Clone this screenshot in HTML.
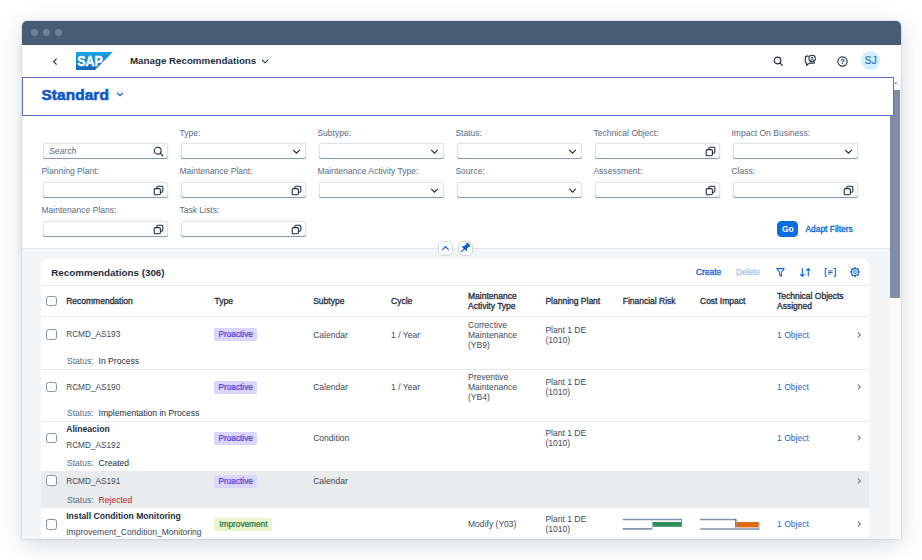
<!DOCTYPE html>
<html lang="en">
<head>
<meta charset="utf-8">
<title>Manage Recommendations</title>
<style>
*{box-sizing:border-box;margin:0;padding:0}
html,body{width:922px;height:560px;overflow:hidden;background:#fff}
body{font-family:"Liberation Sans",sans-serif;color:#1d2d3e;position:relative}
.abs{position:absolute}
.win{position:absolute;left:22px;top:21px;width:878.6px;height:518px;border-radius:5px 5px 0 0;background:#fff;box-shadow:0 5px 22px rgba(50,65,90,.20),0 0 2px rgba(50,65,90,.35);overflow:hidden}
.tbar{position:absolute;left:0;top:0;width:879px;height:24px;background:#475c76}
.dot{position:absolute;top:8px;width:7px;height:7px;border-radius:50%;background:#6e8099}
.shell{position:absolute;left:0;top:24px;width:879px;height:32px;background:#fff}
.t{position:absolute;white-space:nowrap;line-height:1}
.hdr{position:absolute;left:0;top:56px;width:871.5px;height:38.5px;border:1px solid #5b6fc4;background:#fff}
.filters{position:absolute;left:0;top:93px;width:868px;height:135px;background:#fff}
.content{position:absolute;left:0;top:227px;width:868px;height:291px;background:#f4f5f7;border-top:1.4px solid #e3e5e7}
.lbl{position:absolute;font-size:8.55px;color:#5b6b7c;white-space:nowrap;line-height:10px}
.inp{position:absolute;width:125px;height:16px;background:#fff;border-radius:2.5px;box-shadow:0 -1px 0 #8b9ab2 inset,0 0 0 1px #e1e5ea inset,0 0 1.5px rgba(100,115,135,.2)}
.inp svg{position:absolute;right:3.4px;top:2.7px;width:11px;height:11px}
.sb{position:absolute;left:867.5px;top:56px;width:11.1px;height:462px;background:#fbfbfc}
.thumb{position:absolute;left:868px;top:68.6px;width:9.7px;height:208.6px;background:#7d8da9}
.card{position:absolute;left:18.5px;top:238px;width:828.2px;height:281px;background:#fff;border-radius:5px 5px 0 0;overflow:hidden}
.row{position:absolute;left:0;width:828px;border-top:1px solid #e6e8ea}
.cb{position:absolute;left:5.8px;width:10.5px;height:10.5px;border:1px solid #89939e;border-radius:2.5px;background:#fff}
.c{position:absolute;font-size:8.55px;line-height:10px;color:#3d4a58;white-space:nowrap}
.h{position:absolute;font-size:8.5px;line-height:10px;color:#1d2d3e;-webkit-text-stroke:.3px #1d2d3e;white-space:nowrap}
.b{position:absolute;font-size:8.65px;line-height:10px;color:#1d2d3e;font-weight:bold;white-space:nowrap}
.id{font-size:8.25px}
.tag{position:absolute;font-size:8.25px;-webkit-text-stroke:.22px currentColor;text-align:center;line-height:14px;height:13px;padding:0;border-radius:2px;white-space:nowrap}
.pro{background:#dcd6ff;color:#4c3cd0}
.imp{background:#ebf5cb;color:#256f3a}
.lnk{color:#1f66cc}
.arr{position:absolute;left:815.5px;width:6px;height:8px}
</style>
</head>
<body>
<div class="win">
  <div class="tbar">
    <div class="dot" style="left:9px"></div><div class="dot" style="left:21px"></div><div class="dot" style="left:33px"></div>
  </div>
  <div class="shell">
    <svg class="abs" style="left:30px;top:12px" width="6" height="9" viewBox="0 0 6 9"><path d="M4.6 1.6 L1.7 4.6 L4.6 7.6" fill="none" stroke="#2a3644" stroke-width="1.25"/></svg>
    <svg class="abs" style="left:54px;top:7px" width="37" height="18" viewBox="0 0 37 18">
      <defs><linearGradient id="sg" x1="0" y1="0" x2="0" y2="1"><stop offset="0" stop-color="#1aa3e8"/><stop offset="1" stop-color="#1667b8"/></linearGradient></defs>
      <path d="M0 0H37L19 18H0Z" fill="url(#sg)"/>
      <text x="1.2" y="13.8" font-family="Liberation Sans, sans-serif" font-weight="bold" font-size="15.5" fill="#fff" stroke="#fff" stroke-width=".5" textLength="25.5" lengthAdjust="spacingAndGlyphs">SAP</text>
    </svg>
    <div class="t" style="left:108px;top:11px;font-size:9.75px;font-weight:bold;color:#1d2d3e">Manage Recommendations</div>
    <svg class="abs" style="left:239px;top:14px" width="8" height="5" viewBox="0 0 8 5"><path d="M1 .8 L4 3.8 L7 .8" fill="none" stroke="#1d2d3e" stroke-width="1.1"/></svg>
    <svg class="abs" style="left:751px;top:11px" width="11" height="11" viewBox="0 0 11 11"><circle cx="4.5" cy="4.5" r="3.3" fill="none" stroke="#1d2d3e" stroke-width="1.2"/><path d="M7 7 L9.6 9.6" stroke="#1d2d3e" stroke-width="1.3"/></svg>
    <svg class="abs" style="left:781.3px;top:9.3px" width="14.3" height="13.2" viewBox="0 0 13 12"><path d="M5.2 1.9 H3.4 Q2.1 1.9 2.1 3.2 V7 Q2.1 8.3 3.4 8.3 V10.3 L5.8 8.3 H9.6 Q10.6 8.3 10.8 7.6" fill="none" stroke="#1d2d3e" stroke-width="1.05" stroke-linejoin="round"/><circle cx="8.3" cy="4.1" r="2.9" fill="none" stroke="#1d2d3e" stroke-width="1"/><circle cx="8.3" cy="3.3" r=".9" fill="#1d2d3e"/><path d="M6.5 6 Q8.3 4.2 10.1 6" fill="none" stroke="#1d2d3e" stroke-width=".9"/></svg>
    <svg class="abs" style="left:815px;top:11px" width="11" height="11" viewBox="0 0 11 11"><circle cx="5.5" cy="5.5" r="4.6" fill="none" stroke="#1d2d3e" stroke-width="1.1"/><text x="5.5" y="8.3" text-anchor="middle" font-family="Liberation Sans, sans-serif" font-weight="bold" font-size="7.5" fill="#1d2d3e">?</text></svg>
    <div class="abs" style="left:839.3px;top:6.4px;width:19px;height:19px;border-radius:50%;background:#d1efff"></div>
    <div class="t" style="left:839px;top:11px;width:20px;text-align:center;font-size:10px;letter-spacing:.4px;color:#2a6fc4;-webkit-text-stroke:.2px #2a6fc4">SJ</div>
  </div>
  <div class="sb"></div>
  <div class="thumb"></div>
  <svg class="abs" style="left:871.6px;top:60.6px" width="3.6" height="2.9" viewBox="0 0 5 4"><path d="M.3 3.6 L2.5 .5 L4.7 3.6 Z" fill="#4a4f57"/></svg>
  <div class="filters">
<div class="inp" style="left:20.6px;top:29px"><span class="t" style="left:6.5px;top:4px;font-size:8.55px;font-style:italic;color:#556b82">Search</span><svg viewBox="0 0 11 11"><circle cx="4.7" cy="4.7" r="3.4" fill="none" stroke="#1d2d3e" stroke-width="1.1"/><path d="M7.2 7.2 L10 10" stroke="#1d2d3e" stroke-width="1.2"/></svg></div>
<div class="lbl" style="left:157.4px;top:14px">Type:</div>
<div class="inp" style="left:158.6px;top:29px"><svg viewBox="0 0 11 11"><path d="M2.2 3.9 L5.5 7.1 L8.8 3.9" fill="none" stroke="#1d2d3e" stroke-width="1.15"/></svg></div>
<div class="lbl" style="left:295.4px;top:14px">Subtype:</div>
<div class="inp" style="left:296.6px;top:29px"><svg viewBox="0 0 11 11"><path d="M2.2 3.9 L5.5 7.1 L8.8 3.9" fill="none" stroke="#1d2d3e" stroke-width="1.15"/></svg></div>
<div class="lbl" style="left:433.4px;top:14px">Status:</div>
<div class="inp" style="left:434.6px;top:29px"><svg viewBox="0 0 11 11"><path d="M2.2 3.9 L5.5 7.1 L8.8 3.9" fill="none" stroke="#1d2d3e" stroke-width="1.15"/></svg></div>
<div class="lbl" style="left:571.4px;top:14px">Technical Object:</div>
<div class="inp" style="left:572.6px;top:29px"><svg viewBox="0 0 11 11"><rect x="1.2" y="3.6" width="6.2" height="6.2" rx="1.2" fill="#fff" stroke="#1d2d3e" stroke-width="1.1"/><path d="M3.8 3.4 V2.3 Q3.8 1.2 4.9 1.2 H8.7 Q9.8 1.2 9.8 2.3 V6.1 Q9.8 7.2 8.7 7.2 H7.6" fill="none" stroke="#1d2d3e" stroke-width="1.1"/></svg></div>
<div class="lbl" style="left:709.4px;top:14px">Impact On Business:</div>
<div class="inp" style="left:710.6px;top:29px"><svg viewBox="0 0 11 11"><path d="M2.2 3.9 L5.5 7.1 L8.8 3.9" fill="none" stroke="#1d2d3e" stroke-width="1.15"/></svg></div>
<div class="lbl" style="left:19.4px;top:52px">Planning Plant:</div>
<div class="inp" style="left:20.6px;top:68px"><svg viewBox="0 0 11 11"><rect x="1.2" y="3.6" width="6.2" height="6.2" rx="1.2" fill="#fff" stroke="#1d2d3e" stroke-width="1.1"/><path d="M3.8 3.4 V2.3 Q3.8 1.2 4.9 1.2 H8.7 Q9.8 1.2 9.8 2.3 V6.1 Q9.8 7.2 8.7 7.2 H7.6" fill="none" stroke="#1d2d3e" stroke-width="1.1"/></svg></div>
<div class="lbl" style="left:157.4px;top:52px">Maintenance Plant:</div>
<div class="inp" style="left:158.6px;top:68px"><svg viewBox="0 0 11 11"><rect x="1.2" y="3.6" width="6.2" height="6.2" rx="1.2" fill="#fff" stroke="#1d2d3e" stroke-width="1.1"/><path d="M3.8 3.4 V2.3 Q3.8 1.2 4.9 1.2 H8.7 Q9.8 1.2 9.8 2.3 V6.1 Q9.8 7.2 8.7 7.2 H7.6" fill="none" stroke="#1d2d3e" stroke-width="1.1"/></svg></div>
<div class="lbl" style="left:295.4px;top:52px">Maintenance Activity Type:</div>
<div class="inp" style="left:296.6px;top:68px"><svg viewBox="0 0 11 11"><path d="M2.2 3.9 L5.5 7.1 L8.8 3.9" fill="none" stroke="#1d2d3e" stroke-width="1.15"/></svg></div>
<div class="lbl" style="left:433.4px;top:52px">Source:</div>
<div class="inp" style="left:434.6px;top:68px"><svg viewBox="0 0 11 11"><path d="M2.2 3.9 L5.5 7.1 L8.8 3.9" fill="none" stroke="#1d2d3e" stroke-width="1.15"/></svg></div>
<div class="lbl" style="left:571.4px;top:52px">Assessment:</div>
<div class="inp" style="left:572.6px;top:68px"><svg viewBox="0 0 11 11"><rect x="1.2" y="3.6" width="6.2" height="6.2" rx="1.2" fill="#fff" stroke="#1d2d3e" stroke-width="1.1"/><path d="M3.8 3.4 V2.3 Q3.8 1.2 4.9 1.2 H8.7 Q9.8 1.2 9.8 2.3 V6.1 Q9.8 7.2 8.7 7.2 H7.6" fill="none" stroke="#1d2d3e" stroke-width="1.1"/></svg></div>
<div class="lbl" style="left:709.4px;top:52px">Class:</div>
<div class="inp" style="left:710.6px;top:68px"><svg viewBox="0 0 11 11"><rect x="1.2" y="3.6" width="6.2" height="6.2" rx="1.2" fill="#fff" stroke="#1d2d3e" stroke-width="1.1"/><path d="M3.8 3.4 V2.3 Q3.8 1.2 4.9 1.2 H8.7 Q9.8 1.2 9.8 2.3 V6.1 Q9.8 7.2 8.7 7.2 H7.6" fill="none" stroke="#1d2d3e" stroke-width="1.1"/></svg></div>
<div class="lbl" style="left:19.4px;top:91px">Maintenance Plans:</div>
<div class="inp" style="left:20.6px;top:107px"><svg viewBox="0 0 11 11"><rect x="1.2" y="3.6" width="6.2" height="6.2" rx="1.2" fill="#fff" stroke="#1d2d3e" stroke-width="1.1"/><path d="M3.8 3.4 V2.3 Q3.8 1.2 4.9 1.2 H8.7 Q9.8 1.2 9.8 2.3 V6.1 Q9.8 7.2 8.7 7.2 H7.6" fill="none" stroke="#1d2d3e" stroke-width="1.1"/></svg></div>
<div class="lbl" style="left:157.4px;top:91px">Task Lists:</div>
<div class="inp" style="left:158.6px;top:107px"><svg viewBox="0 0 11 11"><rect x="1.2" y="3.6" width="6.2" height="6.2" rx="1.2" fill="#fff" stroke="#1d2d3e" stroke-width="1.1"/><path d="M3.8 3.4 V2.3 Q3.8 1.2 4.9 1.2 H8.7 Q9.8 1.2 9.8 2.3 V6.1 Q9.8 7.2 8.7 7.2 H7.6" fill="none" stroke="#1d2d3e" stroke-width="1.1"/></svg></div>
<div class="abs" style="left:755.4px;top:107px;width:21px;height:15.5px;border-radius:4.5px;background:#0b6de0"></div>
<div class="t" style="left:755.4px;top:111px;width:21px;text-align:center;font-size:8.6px;font-weight:bold;color:#fff">Go</div>
<div class="t" style="left:783.4px;top:111px;font-size:8.45px;-webkit-text-stroke:.3px #0a62d6;color:#0a62d6">Adapt Filters</div>
  </div>
  <div class="hdr">
    <div class="t" style="left:18.4px;top:9px;font-size:15.4px;font-weight:bold;color:#0f58c9;-webkit-text-stroke:.6px #0f58c9;letter-spacing:.1px">Standard</div>
    <svg class="abs" style="left:93px;top:14.3px" width="8" height="5" viewBox="0 0 8 5"><path d="M1.2 .9 L4 3.7 L6.8 .9" fill="none" stroke="#0f58c9" stroke-width="1.2"/></svg>
  </div>
  <div class="content"></div>

<div class="abs" style="left:415.8px;top:220px;width:15px;height:15px;border-radius:5px;background:#fff;border:1px solid #d3d9df"></div>
<svg class="abs" style="left:419px;top:224px" width="9" height="6" viewBox="0 0 9 6"><path d="M1.3 4.8 L4.5 1.6 L7.7 4.8" fill="none" stroke="#0a62d6" stroke-width="1.2"/></svg>
<div class="abs" style="left:435.6px;top:220px;width:15px;height:15px;border-radius:5px;background:#fff;border:1px solid #d3d9df"></div>
<svg class="abs" style="left:438.2px;top:222.2px" width="10" height="10" viewBox="0 0 10 10"><g transform="rotate(45 5 5)" fill="#0a5fd0"><rect x="2.4" y="-.6" width="5.2" height="1.7" rx=".5"/><rect x="3.2" y="1" width="3.6" height="3"/><path d="M3.2 3.6 L1.6 6.4 H8.4 L6.8 3.6 Z"/><rect x="4.5" y="6.2" width="1" height="4.6"/></g></svg>

  <div class="card">
<div class="abs" style="left:0;top:212px;width:829px;height:37px;background:#e9ebed"></div>
<div class="abs" style="left:0;top:26.1px;width:829px;height:1px;background:#e8eaec"></div>
<div class="abs" style="left:0;top:57.1px;width:829px;height:1px;background:#e8eaec"></div>
<div class="abs" style="left:0;top:109.8px;width:829px;height:1px;background:#e8eaec"></div>
<div class="abs" style="left:0;top:161.8px;width:829px;height:1px;background:#e8eaec"></div>
<div class="t" style="left:10.8px;top:8.6px;font-size:9.8px;font-weight:bold;color:#1d2d3e">Recommendations (306)</div>
<div class="t" style="left:655.5px;top:9.2px;font-size:8.4px;-webkit-text-stroke:.3px #0a62d6;color:#0a62d6">Create</div>
<div class="t" style="left:695.5px;top:9.2px;font-size:8.4px;-webkit-text-stroke:.3px #a9c6ee;color:#a9c6ee">Delete</div>
<svg class="abs" style="left:734.5px;top:8px" width="11" height="11" viewBox="0 0 11 11"><path d="M1.8 1.6 H9.2 L6.4 5.3 V9.3 L4.6 8.2 V5.3 Z" fill="none" stroke="#1466d6" stroke-width="1.05" stroke-linejoin="round"/></svg>
<svg class="abs" style="left:758.5px;top:8px" width="13" height="11" viewBox="0 0 13 11"><path d="M3.3 1.3 V9 M1.3 7.1 L3.3 9.3 L5.3 7.1 M9.3 9.5 V1.8 M7.3 3.7 L9.3 1.5 L11.3 3.7" fill="none" stroke="#1466d6" stroke-width="1.15"/></svg>
<svg class="abs" style="left:783.5px;top:8px" width="13" height="11" viewBox="0 0 13 11"><path d="M3 1.5 H1.3 V9.3 H3 M9.7 1.5 H11.4 V9.3 H9.7" fill="none" stroke="#1466d6" stroke-width="1.05"/><path d="M4.2 3.9 H8.6 M4.2 5.5 H8.6 M4.2 7.1 H6.4" stroke="#1466d6" stroke-width=".95"/></svg>
<svg class="abs" style="left:808.5px;top:7px" width="12" height="12" viewBox="0 0 12 12"><circle cx="6" cy="6.1" r="3.5" fill="none" stroke="#1466d6" stroke-width="1.05"/><circle cx="6" cy="6.1" r="1.45" fill="none" stroke="#1466d6" stroke-width=".95"/><path d="M6 1.2V2.6M6 9.6V11M1.1 6.1H2.5M9.5 6.1H10.9M2.55 2.65L3.5 3.6M8.5 8.6L9.45 9.55M2.55 9.55L3.5 8.6M8.5 3.6L9.45 2.65" stroke="#1466d6" stroke-width="1.5"/></svg>
<div class="cb" style="top:36.95px"></div>
<div class="h" style="left:25.7px;top:37px;">Recommendation</div>
<div class="h" style="left:174.1px;top:37px;">Type</div>
<div class="h" style="left:272.7px;top:37px;">Subtype</div>
<div class="h" style="left:350.5px;top:37px;">Cycle</div>
<div class="h" style="left:427.5px;top:32px;">Maintenance<br>Activity Type</div>
<div class="h" style="left:504.9px;top:37px;">Planning Plant</div>
<div class="h" style="left:582.2px;top:37px;">Financial Risk</div>
<div class="h" style="left:659.5px;top:37px;">Cost Impact</div>
<div class="h" style="left:736.5px;top:32px;">Technical Objects<br>Assigned</div>
<div class="cb" style="top:70.35px"></div>
<div class="c id" style="left:25.7px;top:71px;">RCMD_AS193</div>
<div class="tag pro" style="left:173.9px;top:69px;width:42.7px">Proactive</div>
<div class="c" style="left:272.7px;top:71px;">Calendar</div>
<div class="c" style="left:350.5px;top:71px;">1 / Year</div>
<div class="c" style="left:427.5px;top:61px;">Corrective<br>Maintenance<br>(YB9)</div>
<div class="c" style="left:504.9px;top:66px;">Plant 1 DE<br>(1010)</div>
<div class="c lnk" style="left:736.5px;top:71px;">1 Object</div>
<svg class="arr" style="top:71.6px" viewBox="0 0 6 8"><path d="M1.9 1.5 L4.3 3.9 L1.9 6.3" fill="none" stroke="#727a83" stroke-width="1.1"/></svg>
<div class="c" style="left:26.5px;top:97px;"><span style="color:#5b6b7c">Status:</span><span style="color:#1d2d3e;margin-left:5px">In Process</span></div>
<div class="cb" style="top:122.85px"></div>
<div class="c id" style="left:25.7px;top:124px;">RCMD_AS190</div>
<div class="tag pro" style="left:173.9px;top:122px;width:42.7px">Proactive</div>
<div class="c" style="left:272.7px;top:123px;">Calendar</div>
<div class="c" style="left:350.5px;top:123px;">1 / Year</div>
<div class="c" style="left:427.5px;top:113px;">Preventive<br>Maintenance<br>(YB4)</div>
<div class="c" style="left:504.9px;top:118px;">Plant 1 DE<br>(1010)</div>
<div class="c lnk" style="left:736.5px;top:123px;">1 Object</div>
<svg class="arr" style="top:124.1px" viewBox="0 0 6 8"><path d="M1.9 1.5 L4.3 3.9 L1.9 6.3" fill="none" stroke="#727a83" stroke-width="1.1"/></svg>
<div class="c" style="left:26.5px;top:149px;"><span style="color:#5b6b7c">Status:</span><span style="color:#1d2d3e;margin-left:5px">Implementation in Process</span></div>
<div class="cb" style="top:173.85px"></div>
<div class="b" style="left:25.7px;top:165px;">Alineacion</div>
<div class="c id" style="left:25.7px;top:182px;">RCMD_AS192</div>
<div class="tag pro" style="left:173.9px;top:173px;width:42.7px">Proactive</div>
<div class="c" style="left:272.7px;top:174px;">Condition</div>
<div class="c" style="left:504.9px;top:169px;">Plant 1 DE<br>(1010)</div>
<div class="c lnk" style="left:736.5px;top:174px;">1 Object</div>
<svg class="arr" style="top:175.1px" viewBox="0 0 6 8"><path d="M1.9 1.5 L4.3 3.9 L1.9 6.3" fill="none" stroke="#727a83" stroke-width="1.1"/></svg>
<div class="c" style="left:26.5px;top:199px;"><span style="color:#5b6b7c">Status:</span><span style="color:#1d2d3e;margin-left:5px">Created</span></div>
<div class="cb" style="top:216.45px"></div>
<div class="c id" style="left:25.7px;top:218px;">RCMD_AS191</div>
<div class="tag pro" style="left:173.9px;top:216px;width:42.7px">Proactive</div>
<div class="c" style="left:272.7px;top:217px;">Calendar</div>
<svg class="arr" style="top:217.7px" viewBox="0 0 6 8"><path d="M1.9 1.5 L4.3 3.9 L1.9 6.3" fill="none" stroke="#727a83" stroke-width="1.1"/></svg>
<div class="c" style="left:26.5px;top:236px;"><span style="color:#5b6b7c">Status:</span><span style="color:#b3261e;margin-left:5px">Rejected</span></div>
<div class="cb" style="top:260.05px"></div>
<div class="b" style="left:25.7px;top:252px;">Install Condition Monitoring</div>
<div class="c" style="left:25.7px;top:268px;">Improvement_Condition_Monitoring</div>
<div class="tag imp" style="left:173.9px;top:259px;width:58px">Improvement</div>
<div class="c" style="left:427.5px;top:260px;">Modify (Y03)</div>
<div class="c" style="left:504.9px;top:255px;">Plant 1 DE<br>(1010)</div>
<div class="c lnk" style="left:736.5px;top:260px;">1 Object</div>
<svg class="arr" style="top:261.3px" viewBox="0 0 6 8"><path d="M1.9 1.5 L4.3 3.9 L1.9 6.3" fill="none" stroke="#727a83" stroke-width="1.1"/></svg>
<svg class="abs" style="left:581.5px;top:258px" width="62" height="16" viewBox="0 0 62 16">
<path d="M0.8 2.5 H59.8" stroke="#7f92ae" stroke-width="1.4"/><path d="M0.8 11.9 H29.8" stroke="#7f92ae" stroke-width="1.7"/>
<rect x="30.8" y="5" width="28.3" height="4.8" fill="#2f8f58"/><path d="M59.5 2 V10" stroke="#71878f" stroke-width="1"/><path d="M30.3 5 V12.6" stroke="#8aa0a8" stroke-width=".8"/></svg>
<svg class="abs" style="left:658.5px;top:258px" width="62" height="16" viewBox="0 0 62 16">
<path d="M1.2 2.5 H36.6" stroke="#7f92ae" stroke-width="1.4"/><path d="M1.2 12 H60.2" stroke="#7f92ae" stroke-width="1.7"/>
<rect x="37.6" y="5" width="22.1" height="5.4" fill="#e2680f"/><path d="M36.9 2 V10.4" stroke="#2b3440" stroke-width="1"/><path d="M59.9 5 V12.6" stroke="#a08f86" stroke-width=".8"/></svg>
  </div>
</div>
</body>
</html>
